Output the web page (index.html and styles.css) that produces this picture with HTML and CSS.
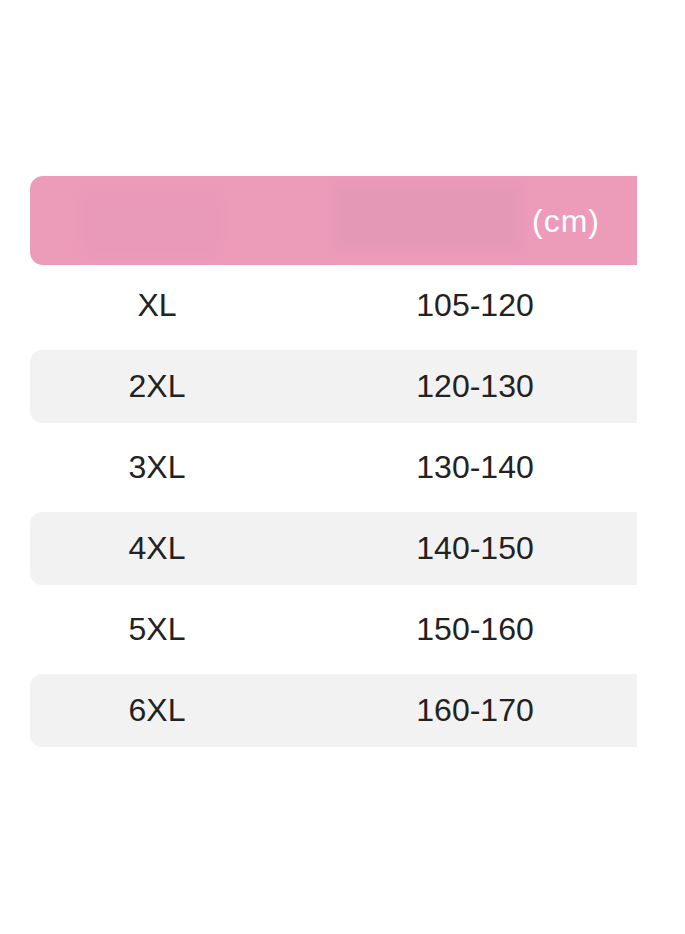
FILE: index.html
```html
<!DOCTYPE html>
<html lang="en">
<head>
<meta charset="utf-8">
<title>Size chart</title>
<link rel="stylesheet" href="styles.css">
</head>
<body>
<div class="chart">
  <div class="head">
    <div class="cell"><div class="blur blur-a"></div></div>
    <div class="cell cell-unit"><div class="blur blur-b"></div><span class="unit">(cm)</span></div>
  </div>
  <div class="row"><div class="cell">XL</div><div class="cell">105-120</div></div>
  <div class="row alt"><div class="cell">2XL</div><div class="cell">120-130</div></div>
  <div class="row"><div class="cell">3XL</div><div class="cell">130-140</div></div>
  <div class="row alt"><div class="cell">4XL</div><div class="cell">140-150</div></div>
  <div class="row"><div class="cell">5XL</div><div class="cell">150-160</div></div>
  <div class="row alt"><div class="cell">6XL</div><div class="cell">160-170</div></div>
</div>
</body>
</html>
```
FILE: styles.css
```css
html, body {
  margin: 0;
  padding: 0;
  background: #ffffff;
}
body {
  font-family: "Liberation Sans", Arial, sans-serif;
  color: #222222;
  padding-top: 176px;
  padding-left: 30px;
}
.chart {
  width: 607px;
  overflow: hidden;
  display: flex;
  flex-direction: column;
}
.head, .row {
  display: grid;
  grid-template-columns: 254px 382px;
  width: 636px;
  flex: none;
}
.head {
  height: 89px;
  background: #ec9bb9;
  border-radius: 13px 0 0 13px;
}
.cell {
  display: flex;
  align-items: center;
  justify-content: center;
}
.head .cell {
  height: 89px;
}
.blur {
  filter: blur(4px);
}
.blur-a {
  width: 133px;
  height: 57px;
  margin-left: -12px;
  margin-top: 2px;
  background: #e99ab8;
}
.cell-unit {
  justify-content: flex-start;
  padding-left: 51px;
}
.blur-b {
  width: 185px;
  height: 65px;
  margin-top: -8px;
  background: #e598b6;
}
.unit {
  color: #ffffff;
  font-size: 32px;
  margin-left: 12px;
  margin-top: 2px;
  letter-spacing: 1px;
}
.row {
  height: 73px;
  margin: 4px 0;
  font-size: 32px;
  border-radius: 12px 0 0 12px;
}
.row.alt {
  background: #f2f2f2;
}
```
